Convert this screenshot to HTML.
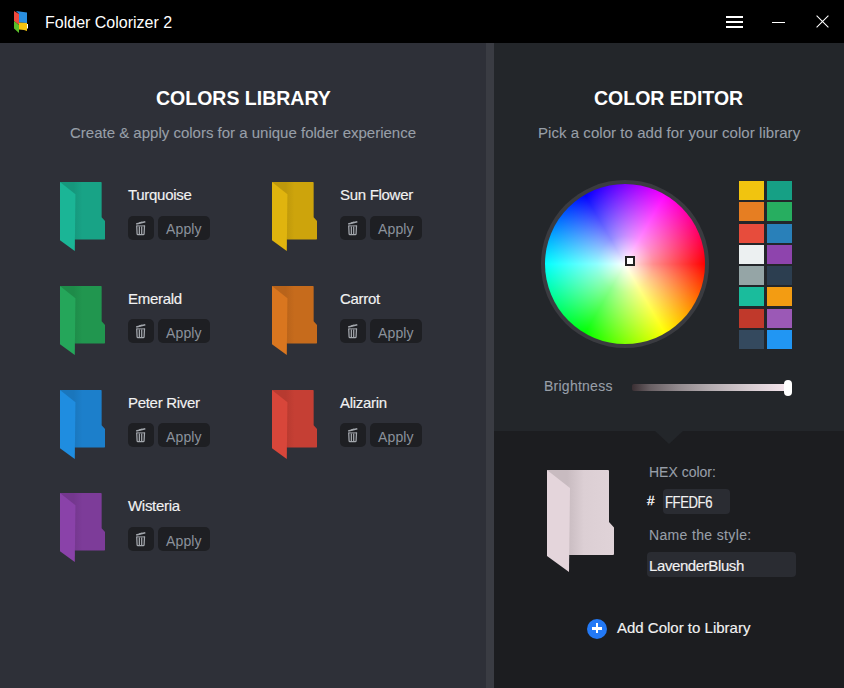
<!DOCTYPE html>
<html><head><meta charset="utf-8">
<style>
*{margin:0;padding:0;box-sizing:border-box}
html,body{width:844px;height:688px;overflow:hidden;background:#000}
body{position:relative;font-family:"Liberation Sans",sans-serif}
.a{position:absolute;white-space:nowrap;line-height:1}
#title{position:absolute;left:0;top:0;width:844px;height:43px;background:#000}
#left{position:absolute;left:0;top:43px;width:486px;height:645px;background:#2e3038}
#sep{position:absolute;left:486px;top:43px;width:8px;height:645px;background:#3a3c43}
#right{position:absolute;left:494px;top:43px;width:350px;height:388px;background:#23262a}
#bottom{position:absolute;left:494px;top:431px;width:350px;height:257px;background:#1c1d20}
.h{color:#fff;font-weight:bold;font-size:19.5px}
.sub{color:#989fa8;font-size:15px;-webkit-text-stroke:0.1px #989fa8}
.nm{color:#f2f2f2;font-size:15px;-webkit-text-stroke:0.15px #f2f2f2}
.btn{position:absolute;background:#1e1f23;border-radius:5px;height:24px}
.tb{width:26px}
.ab{width:52px}
.ap{color:#8b929c;font-size:14px}
.fold{position:absolute;width:45px;height:69px}
.sw{position:absolute;height:19px}
</style></head><body>
<div id="title">
  <svg style="position:absolute;left:0;top:0" width="40" height="40" viewBox="0 0 40 40">
    <path d="M16 11 L27 12.5 L27 23 L19 22.5 L19 14 Z" fill="#2a8fe0"/>
    <path d="M19 22.5 L27 23 L27 31 L24 30 L19 29.5 Z" fill="#f4c20d"/>
    <path d="M27 24 H28 V28.5 H27 Z" fill="#fff"/>
    <path d="M14 11 L19 14 L19 25 L14 21 Z" fill="#ee4a3e"/>
    <path d="M14 21 L19 25 L19 33 L14 28.5 Z" fill="#5bbf2a"/>
  </svg>
  <div class="a" id="apptitle" style="left:45px;top:15px;font-size:16px;color:#fff">Folder Colorizer 2</div>
  <div style="position:absolute;left:726px;top:16px;width:17px;height:2px;background:#fff"></div>
  <div style="position:absolute;left:726px;top:21px;width:17px;height:2px;background:#fff"></div>
  <div style="position:absolute;left:726px;top:26px;width:17px;height:2px;background:#fff"></div>
  <div style="position:absolute;left:772px;top:22px;width:13px;height:1px;background:#fff"></div>
  <svg style="position:absolute;left:815px;top:14px" width="15" height="15" viewBox="0 0 15 15"><path d="M1.6 1.6 L13.4 13.4 M13.4 1.6 L1.6 13.4" stroke="#fff" stroke-width="1.05"/></svg>
</div>
<div id="left"></div>
<div id="sep"></div>
<div id="right"></div>
<div id="bottom"></div>

<div class="a h" id="h1" style="left:156px;top:88.7px">COLORS LIBRARY</div>
<div class="a sub" id="s1" style="left:70px;top:125px">Create &amp; apply colors for a unique folder experience</div>
<div class="a h" id="h2" style="left:594px;top:88.7px">COLOR EDITOR</div>
<div class="a sub" id="s2" style="left:538px;top:125px;letter-spacing:0.05px">Pick a color to add for your color library</div>

<svg style="position:absolute;left:60px;top:182px" width="45" height="69" viewBox="0 0 67 102" preserveAspectRatio="none">
<defs><linearGradient id="g60_182" x1="0" y1="0" x2="1" y2="0"><stop offset="0.3" stop-color="#16977c"/><stop offset="0.5" stop-color="#18a386"/></linearGradient></defs>
<path d="M0 0 H61 Q62 0 62 1 V52 L67 57.5 V84 Q67 85 66 85 H22 Z" fill="url(#g60_182)"/>
<path d="M0 0 L23 18 L22 102 L0 86 Z" fill="#1bb596"/></svg>
<div class="a nm" style="left:128px;top:186.7px;letter-spacing:-0.3px">Turquoise</div>
<div class="btn tb" style="left:128px;top:216px"></div>
<svg style="position:absolute;left:136px;top:221px" width="10" height="15" viewBox="0 0 10 15"><g stroke="#a3a7ad" fill="none"><path d="M0.2 3.0 L9.3 0.8" stroke-width="1.5"/><path d="M3.2 1.8 L6.3 1.1" stroke-width="1.3"/><path d="M0.4 4.9 H9.1" stroke-width="1.0"/><path d="M0.7 4.6 L1.1 12.8 Q1.2 13.5 2 13.5 H7.2 Q8 13.5 8.1 12.8 L8.5 4.6" stroke-width="1.25"/><path d="M3.35 5.4 V12.9 M5.7 5.4 V12.9" stroke-width="1.25"/></g></svg>
<div class="btn ab" style="left:158px;top:216px"></div>
<div class="a ap" style="left:166px;top:222.3px;letter-spacing:0.15px">Apply</div>
<svg style="position:absolute;left:272px;top:182px" width="45" height="69" viewBox="0 0 67 102" preserveAspectRatio="none">
<defs><linearGradient id="g272_182" x1="0" y1="0" x2="1" y2="0"><stop offset="0.3" stop-color="#be980b"/><stop offset="0.5" stop-color="#cda40c"/></linearGradient></defs>
<path d="M0 0 H61 Q62 0 62 1 V52 L67 57.5 V84 Q67 85 66 85 H22 Z" fill="url(#g272_182)"/>
<path d="M0 0 L23 18 L22 102 L0 86 Z" fill="#e0b40e"/></svg>
<div class="a nm" style="left:340px;top:186.7px;letter-spacing:-0.3px">Sun Flower</div>
<div class="btn tb" style="left:340px;top:216px"></div>
<svg style="position:absolute;left:348px;top:221px" width="10" height="15" viewBox="0 0 10 15"><g stroke="#a3a7ad" fill="none"><path d="M0.2 3.0 L9.3 0.8" stroke-width="1.5"/><path d="M3.2 1.8 L6.3 1.1" stroke-width="1.3"/><path d="M0.4 4.9 H9.1" stroke-width="1.0"/><path d="M0.7 4.6 L1.1 12.8 Q1.2 13.5 2 13.5 H7.2 Q8 13.5 8.1 12.8 L8.5 4.6" stroke-width="1.25"/><path d="M3.35 5.4 V12.9 M5.7 5.4 V12.9" stroke-width="1.25"/></g></svg>
<div class="btn ab" style="left:370px;top:216px"></div>
<div class="a ap" style="left:378px;top:222.3px;letter-spacing:0.15px">Apply</div>
<svg style="position:absolute;left:60px;top:285.8px" width="45" height="69" viewBox="0 0 67 102" preserveAspectRatio="none">
<defs><linearGradient id="g60_285.8" x1="0" y1="0" x2="1" y2="0"><stop offset="0.3" stop-color="#1e8b49"/><stop offset="0.5" stop-color="#21964f"/></linearGradient></defs>
<path d="M0 0 H61 Q62 0 62 1 V52 L67 57.5 V84 Q67 85 66 85 H22 Z" fill="url(#g60_285.8)"/>
<path d="M0 0 L23 18 L22 102 L0 86 Z" fill="#25a65a"/></svg>
<div class="a nm" style="left:128px;top:290.5px;letter-spacing:-0.3px">Emerald</div>
<div class="btn tb" style="left:128px;top:319.4px"></div>
<svg style="position:absolute;left:136px;top:324.4px" width="10" height="15" viewBox="0 0 10 15"><g stroke="#a3a7ad" fill="none"><path d="M0.2 3.0 L9.3 0.8" stroke-width="1.5"/><path d="M3.2 1.8 L6.3 1.1" stroke-width="1.3"/><path d="M0.4 4.9 H9.1" stroke-width="1.0"/><path d="M0.7 4.6 L1.1 12.8 Q1.2 13.5 2 13.5 H7.2 Q8 13.5 8.1 12.8 L8.5 4.6" stroke-width="1.25"/><path d="M3.35 5.4 V12.9 M5.7 5.4 V12.9" stroke-width="1.25"/></g></svg>
<div class="btn ab" style="left:158px;top:319.4px"></div>
<div class="a ap" style="left:166px;top:325.7px;letter-spacing:0.15px">Apply</div>
<svg style="position:absolute;left:272px;top:285.8px" width="45" height="69" viewBox="0 0 67 102" preserveAspectRatio="none">
<defs><linearGradient id="g272_285.8" x1="0" y1="0" x2="1" y2="0"><stop offset="0.3" stop-color="#b8631a"/><stop offset="0.5" stop-color="#c66b1c"/></linearGradient></defs>
<path d="M0 0 H61 Q62 0 62 1 V52 L67 57.5 V84 Q67 85 66 85 H22 Z" fill="url(#g272_285.8)"/>
<path d="M0 0 L23 18 L22 102 L0 86 Z" fill="#d9761f"/></svg>
<div class="a nm" style="left:340px;top:290.5px;letter-spacing:-0.3px">Carrot</div>
<div class="btn tb" style="left:340px;top:319.4px"></div>
<svg style="position:absolute;left:348px;top:324.4px" width="10" height="15" viewBox="0 0 10 15"><g stroke="#a3a7ad" fill="none"><path d="M0.2 3.0 L9.3 0.8" stroke-width="1.5"/><path d="M3.2 1.8 L6.3 1.1" stroke-width="1.3"/><path d="M0.4 4.9 H9.1" stroke-width="1.0"/><path d="M0.7 4.6 L1.1 12.8 Q1.2 13.5 2 13.5 H7.2 Q8 13.5 8.1 12.8 L8.5 4.6" stroke-width="1.25"/><path d="M3.35 5.4 V12.9 M5.7 5.4 V12.9" stroke-width="1.25"/></g></svg>
<div class="btn ab" style="left:370px;top:319.4px"></div>
<div class="a ap" style="left:378px;top:325.7px;letter-spacing:0.15px">Apply</div>
<svg style="position:absolute;left:60px;top:389.8px" width="45" height="69" viewBox="0 0 67 102" preserveAspectRatio="none">
<defs><linearGradient id="g60_389.8" x1="0" y1="0" x2="1" y2="0"><stop offset="0.3" stop-color="#1a76bc"/><stop offset="0.5" stop-color="#1c7fcb"/></linearGradient></defs>
<path d="M0 0 H61 Q62 0 62 1 V52 L67 57.5 V84 Q67 85 66 85 H22 Z" fill="url(#g60_389.8)"/>
<path d="M0 0 L23 18 L22 102 L0 86 Z" fill="#1f8de0"/></svg>
<div class="a nm" style="left:128px;top:394.5px;letter-spacing:-0.3px">Peter River</div>
<div class="btn tb" style="left:128px;top:423.3px"></div>
<svg style="position:absolute;left:136px;top:428.3px" width="10" height="15" viewBox="0 0 10 15"><g stroke="#a3a7ad" fill="none"><path d="M0.2 3.0 L9.3 0.8" stroke-width="1.5"/><path d="M3.2 1.8 L6.3 1.1" stroke-width="1.3"/><path d="M0.4 4.9 H9.1" stroke-width="1.0"/><path d="M0.7 4.6 L1.1 12.8 Q1.2 13.5 2 13.5 H7.2 Q8 13.5 8.1 12.8 L8.5 4.6" stroke-width="1.25"/><path d="M3.35 5.4 V12.9 M5.7 5.4 V12.9" stroke-width="1.25"/></g></svg>
<div class="btn ab" style="left:158px;top:423.3px"></div>
<div class="a ap" style="left:166px;top:429.6px;letter-spacing:0.15px">Apply</div>
<svg style="position:absolute;left:272px;top:389.8px" width="45" height="69" viewBox="0 0 67 102" preserveAspectRatio="none">
<defs><linearGradient id="g272_389.8" x1="0" y1="0" x2="1" y2="0"><stop offset="0.3" stop-color="#b73a30"/><stop offset="0.5" stop-color="#c53f34"/></linearGradient></defs>
<path d="M0 0 H61 Q62 0 62 1 V52 L67 57.5 V84 Q67 85 66 85 H22 Z" fill="url(#g272_389.8)"/>
<path d="M0 0 L23 18 L22 102 L0 86 Z" fill="#d8463a"/></svg>
<div class="a nm" style="left:340px;top:394.5px;letter-spacing:-0.3px">Alizarin</div>
<div class="btn tb" style="left:340px;top:423.3px"></div>
<svg style="position:absolute;left:348px;top:428.3px" width="10" height="15" viewBox="0 0 10 15"><g stroke="#a3a7ad" fill="none"><path d="M0.2 3.0 L9.3 0.8" stroke-width="1.5"/><path d="M3.2 1.8 L6.3 1.1" stroke-width="1.3"/><path d="M0.4 4.9 H9.1" stroke-width="1.0"/><path d="M0.7 4.6 L1.1 12.8 Q1.2 13.5 2 13.5 H7.2 Q8 13.5 8.1 12.8 L8.5 4.6" stroke-width="1.25"/><path d="M3.35 5.4 V12.9 M5.7 5.4 V12.9" stroke-width="1.25"/></g></svg>
<div class="btn ab" style="left:370px;top:423.3px"></div>
<div class="a ap" style="left:378px;top:429.6px;letter-spacing:0.15px">Apply</div>
<svg style="position:absolute;left:60px;top:493.4px" width="45" height="69" viewBox="0 0 67 102" preserveAspectRatio="none">
<defs><linearGradient id="g60_493.4" x1="0" y1="0" x2="1" y2="0"><stop offset="0.3" stop-color="#74378e"/><stop offset="0.5" stop-color="#7d3c99"/></linearGradient></defs>
<path d="M0 0 H61 Q62 0 62 1 V52 L67 57.5 V84 Q67 85 66 85 H22 Z" fill="url(#g60_493.4)"/>
<path d="M0 0 L23 18 L22 102 L0 86 Z" fill="#8a42a9"/></svg>
<div class="a nm" style="left:128px;top:498.09999999999997px;letter-spacing:-0.3px">Wisteria</div>
<div class="btn tb" style="left:128px;top:527.2px"></div>
<svg style="position:absolute;left:136px;top:532.2px" width="10" height="15" viewBox="0 0 10 15"><g stroke="#a3a7ad" fill="none"><path d="M0.2 3.0 L9.3 0.8" stroke-width="1.5"/><path d="M3.2 1.8 L6.3 1.1" stroke-width="1.3"/><path d="M0.4 4.9 H9.1" stroke-width="1.0"/><path d="M0.7 4.6 L1.1 12.8 Q1.2 13.5 2 13.5 H7.2 Q8 13.5 8.1 12.8 L8.5 4.6" stroke-width="1.25"/><path d="M3.35 5.4 V12.9 M5.7 5.4 V12.9" stroke-width="1.25"/></g></svg>
<div class="btn ab" style="left:158px;top:527.2px"></div>
<div class="a ap" style="left:166px;top:533.5px;letter-spacing:0.15px">Apply</div>

<div style="position:absolute;left:541px;top:180px;width:168px;height:168px;border-radius:50%;background:#3a3b40"></div>
<div id="wheel" style="position:absolute;left:545px;top:184px;width:160px;height:160px;border-radius:50%;background:radial-gradient(circle closest-side, #fff 0%, rgba(255,255,255,0.56) 35%, rgba(255,255,255,0) 100%), conic-gradient(from 90deg, #f00, #ff0, #0f0, #0ff, #00f, #f0f, #f00)"></div>
<div style="position:absolute;left:625px;top:256px;width:10px;height:10px;border:2px solid #222;background:#fff"></div>
<div class="sw" style="left:739px;top:181.0px;width:25px;background:#f1c40f"></div>
<div class="sw" style="left:766.5px;top:181.0px;width:25px;background:#16a085"></div>
<div class="sw" style="left:739px;top:202.27px;width:25px;background:#e67e22"></div>
<div class="sw" style="left:766.5px;top:202.27px;width:25px;background:#27ae60"></div>
<div class="sw" style="left:739px;top:223.54px;width:25px;background:#e74c3c"></div>
<div class="sw" style="left:766.5px;top:223.54px;width:25px;background:#2980b9"></div>
<div class="sw" style="left:739px;top:244.81px;width:25px;background:#ecf0f1"></div>
<div class="sw" style="left:766.5px;top:244.81px;width:25px;background:#8e44ad"></div>
<div class="sw" style="left:739px;top:266.08px;width:25px;background:#95a5a6"></div>
<div class="sw" style="left:766.5px;top:266.08px;width:25px;background:#2c3e50"></div>
<div class="sw" style="left:739px;top:287.35px;width:25px;background:#1abc9c"></div>
<div class="sw" style="left:766.5px;top:287.35px;width:25px;background:#f39c12"></div>
<div class="sw" style="left:739px;top:308.62px;width:25px;background:#c0392b"></div>
<div class="sw" style="left:766.5px;top:308.62px;width:25px;background:#9b59b6"></div>
<div class="sw" style="left:739px;top:329.89px;width:25px;background:#34495e"></div>
<div class="sw" style="left:766.5px;top:329.89px;width:25px;background:#2196f3"></div>

<div class="a sub" id="bright" style="left:544px;top:379px;font-size:14px;letter-spacing:0.25px">Brightness</div>
<div style="position:absolute;left:632px;top:384.2px;width:156px;height:6.4px;border-radius:2px;background:linear-gradient(90deg,#3a2f33 0%,#6a6165 12%,#928a8e 30%,#b3abaf 50%,#d6cbd0 75%,#f6e6ee 100%)"></div>
<div style="position:absolute;left:784px;top:380px;width:8px;height:16px;border-radius:4px;background:#fff"></div>

<svg style="position:absolute;left:655px;top:431px" width="28" height="13" viewBox="0 0 28 13"><path d="M0 0 L28 0 L14 13 Z" fill="#23262a"/></svg>

<svg style="position:absolute;left:547px;top:470px" width="67" height="102" viewBox="0 0 67 102">
<defs><linearGradient id="bigg" x1="0" y1="0" x2="1" y2="0"><stop offset="0.3" stop-color="#c8bbc0"/><stop offset="0.55" stop-color="#dccfd4"/><stop offset="1" stop-color="#e0d3d8"/></linearGradient></defs>
<path d="M0 0 H61 Q62 0 62 1 V52 L67 57.5 V84 Q67 85 66 85 H22 Z" fill="url(#bigg)"/>
<path d="M0 0 L23 18 L22 102 L0 86 Z" fill="#e4d5db"/></svg>

<div class="a sub" id="hexl" style="left:649px;top:465px;font-size:14px">HEX color:</div>
<div class="a" id="hash" style="left:647px;top:493.5px;font-size:13.5px;color:#fff;-webkit-text-stroke:0.3px #fff">#</div>
<div style="position:absolute;left:663px;top:489px;width:67px;height:25px;border-radius:4px;background:#2a2c32"></div>
<div class="a nm" id="hexv" style="left:665px;top:495px;font-size:16px;letter-spacing:-0.5px;transform:scaleX(0.82);transform-origin:0 0">FFEDF6</div>
<div class="a sub" id="namel" style="left:649px;top:528px;font-size:14px;letter-spacing:0.35px">Name the style:</div>
<div style="position:absolute;left:647px;top:552px;width:149px;height:25px;border-radius:4px;background:#2a2c32"></div>
<div class="a nm" id="namev" style="left:649px;top:558px;letter-spacing:-0.4px">LavenderBlush</div>

<div style="position:absolute;left:587px;top:618.5px;width:20px;height:20px;border-radius:50%;background:#2379f5"></div>
<div style="position:absolute;left:592px;top:627.2px;width:10px;height:2.5px;background:#fff"></div>
<div style="position:absolute;left:595.6px;top:623.2px;width:2.5px;height:10px;background:#fff"></div>
<div class="a nm" id="addl" style="left:617px;top:620px">Add Color to Library</div>

</body></html>
